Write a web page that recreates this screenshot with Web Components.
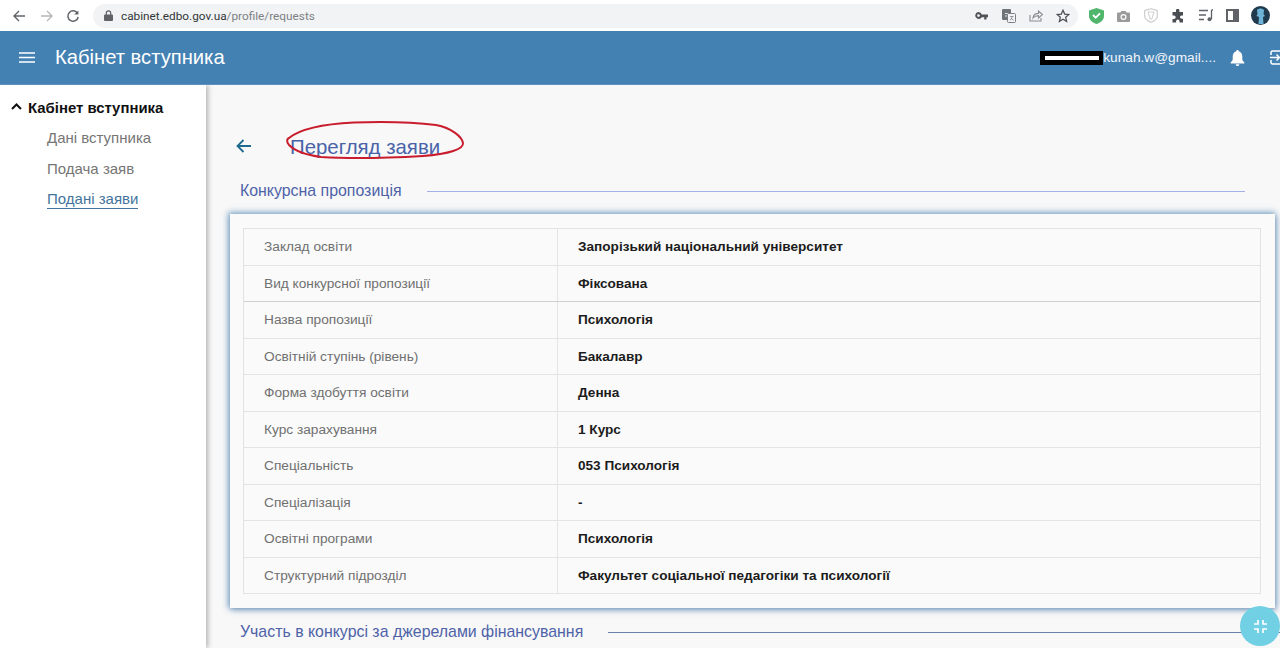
<!DOCTYPE html>
<html lang="uk">
<head>
<meta charset="utf-8">
<title>Перегляд заяви</title>
<style>
  html, body { margin: 0; height: 648px; overflow: hidden; background: #f8f8f8; font-family: "Liberation Sans", Arial, sans-serif; }
  body { display: flex; flex-direction: column; }
</style>
</head>
<body>
<browser-bar url-host="cabinet.edbo.gov.ua" url-path="/profile/requests"></browser-bar>
<app-header title="Кабінет вступника" user="kunah.w@gmail...."></app-header>
<div style="display:flex;flex:1;min-height:0">
  <side-nav>
    <nav-item>Дані вступника</nav-item>
    <nav-item>Подача заяв</nav-item>
    <nav-item active>Подані заяви</nav-item>
  </side-nav>
  <main-view>
    <page-title>Перегляд заяви</page-title>
    <section-title>Конкурсна пропозиція</section-title>
    <info-card>
      <info-row label="Заклад освіти">Запорізький національний університет</info-row>
      <info-row label="Вид конкурсної пропозиції" strong>Фіксована</info-row>
      <info-row label="Назва пропозиції">Психологія</info-row>
      <info-row label="Освітній ступінь (рівень)">Бакалавр</info-row>
      <info-row label="Форма здобуття освіти">Денна</info-row>
      <info-row label="Курс зарахування">1 Курс</info-row>
      <info-row label="Спеціальність">053 Психологія</info-row>
      <info-row label="Спеціалізація">-</info-row>
      <info-row label="Освітні програми">Психологія</info-row>
      <info-row label="Структурний підрозділ">Факультет соціальної педагогіки та психології</info-row>
    </info-card>
    <section-title dark>Участь в конкурсі за джерелами фінансування</section-title>
    <next-card></next-card>
  </main-view>
</div>
<fab-button></fab-button>

<script>
const define = (name, html, init) => {
    customElements.define(name, class extends HTMLElement {
        constructor() {
            super();
            this.attachShadow({ mode: 'open' }).innerHTML = html;
        }
        connectedCallback() {
            if (init) init(this, this.shadowRoot);
        }
    });
};

define('browser-bar', `
<style>
  :host { display: flex; align-items: center; height: 31px; flex: none; background: #fff; box-sizing: border-box; padding: 0 0 0 12px; color: #5f6368; }
  svg { display: block; flex: none; }
  .nav { display: flex; gap: 14px; align-items: center; width: 81px; flex: none; }
  .nav svg:last-child { margin-left: -2px; }
  .pill { width: 985px; height: 24px; border-radius: 12px; background: #f1f3f4; display: flex; align-items: center; box-sizing: border-box; padding: 0 1px 0 11px; flex: none; }
  .url { font: 11.8px "Roboto", "Liberation Sans", sans-serif; color: #33373a; margin-left: 8px; flex: 1; }
  .url span { color: #7d8185; }
  .icons { display: grid; grid-auto-flow: column; grid-auto-columns: 27.25px; justify-items: center; align-items: center; }
  .ext { margin-left: 5px; }
</style>
<div class="nav">
  <svg width="14" height="14" viewBox="0 0 14 14" fill="none" stroke="#5f6368" stroke-width="1.4"><path d="M13 7H2M7 2 2 7l5 5"/></svg>
  <svg width="14" height="14" viewBox="0 0 14 14" fill="none" stroke="#b4b7ba" stroke-width="1.4"><path d="M1 7h11M7 2l5 5-5 5"/></svg>
  <svg width="14" height="14" viewBox="0 0 14 14" fill="none" stroke="#5f6368" stroke-width="1.5"><path d="M11.6 4.4A5.2 5.2 0 1 0 12.2 8"/><path d="M12.4 1.4v4.200H8.200z" fill="#5f6368" stroke="none"/></svg>
</div>
<div class="pill">
  <svg width="9" height="11" viewBox="0 0 9 11" fill="#5f6368"><path d="M1 4.500h7a1 1 0 0 1 1 1V10a1 1 0 0 1-1 1H1a1 1 0 0 1-1-1V5.500a1 1 0 0 1 1-1z"/><path d="M2.300 5V3a2.200 2.200 0 0 1 4.400 0v2" fill="none" stroke="#5f6368" stroke-width="1.200"/></svg>
  <div class="url"><b style="font-weight:400" id="h"></b><span id="p"></span></div>
  <div class="icons">
    <svg width="13" height="8" viewBox="0 0 13 8" fill="#4f5357"><path d="M3.500 0a3.500 3.500 0 0 1 3.300 2.500H13v2.800h-1.500V7.500H9.200V5.300H6.800A3.500 3.500 0 1 1 3.500 0zm0 2.200a1.300 1.300 0 1 0 0 2.800 1.300 1.300 0 0 0 0-2.800z"/></svg>
    <svg width="14" height="14" viewBox="0 0 14 14"><rect x="0" y="0" width="9" height="11" rx="1" fill="#6f7478"/><path d="M3 4.500h3.500M3 7h3" stroke="#e4e6e8"/><rect x="5.500" y="4.500" width="8" height="9" rx="1" fill="#f1f3f4" stroke="#7b8084"/><path d="M8 7.500h3.500M10 7.500c0 2-1 3-2.200 3.600M9 9c.5 1 1.500 1.800 2.500 2.100" stroke="#7b8084" fill="none" stroke-width=".8"/></svg>
    <svg width="14" height="13" viewBox="0 0 14 13" fill="none" stroke="#8a8e92" stroke-width="1.100"><path d="M1 6v6h11V9"/><path d="M4 9c.4-3 2.500-4.600 5.500-4.600V2L13.500 5.500 9.500 9V6.600C7 6.600 5.200 7.500 4 9z"/></svg>
    <svg width="14" height="14" viewBox="0 0 14 14" fill="none" stroke="#4f5357" stroke-width="1.300"><path d="M7 1.300 8.700 5.100l4.100.4-3.100 2.800.9 4.100L7 10.300l-3.600 2.100.9-4.100L1.200 5.500l4.100-.4z"/></svg>
  </div>
</div>
<div class="icons ext">
  <svg width="15" height="16" viewBox="0 0 15 16"><path d="M7.500 0 15 2.500V8c0 4-3.500 6.800-7.500 8C3.500 14.800 0 12 0 8V2.500z" fill="#4fb66b"/><path d="M4 7l2.700 2.700L11 5.300" fill="none" stroke="#fff" stroke-width="1.800"/></svg>
  <svg width="13" height="12" viewBox="0 0 13 12"><path d="M1 2.500h2.500L4.500 1h4l1 1.500H12a1 1 0 0 1 1 1V11a1 1 0 0 1-1 1H1a1 1 0 0 1-1-1V3.500a1 1 0 0 1 1-1z" fill="#9a9a9a"/><circle cx="6.500" cy="7" r="3" fill="#fff"/><circle cx="6.500" cy="7" r="1.800" fill="#9a9a9a"/></svg>
  <svg width="14" height="15" viewBox="0 0 14 15" fill="none" stroke="#c9c9c9" stroke-width="1.100"><path d="M7 .7 13.300 2.500V8c0 3-2.800 5-6.300 6.300C3.500 13 .7 11 .7 8V2.500z"/><path d="M4 4h6L7.800 11H6.200z" stroke="#d4d4d4"/></svg>
  <svg width="14" height="14" viewBox="0 0 14 14" fill="#4a4e52"><path d="M5 1.500a1.700 1.700 0 0 1 3.400 0V3H12v3.400h-1.300a1.700 1.700 0 0 0 0 3.400H12V13.500H8.500v-1.300a1.700 1.700 0 0 0-3.400 0v1.300H1.500V10H3a1.700 1.700 0 0 0 0-3.400H1.500V3H5z"/></svg>
  <svg width="14" height="13" viewBox="0 0 14 13" fill="none" stroke="#5f6368" stroke-width="1.300"><path d="M0 1.500h9M0 6h7M0 10.500h5"/><path d="M12.500 1v9M12.500 1H14"/><circle cx="10.500" cy="10.300" r="2" fill="#5f6368" stroke="none"/></svg>
  <svg width="13" height="13" viewBox="0 0 13 13"><rect x="1" y="1" width="11" height="11" fill="none" stroke="#5f6368" stroke-width="2"/><rect x="7" y="1" width="5" height="11" fill="#5f6368"/></svg>
  <svg width="19" height="19" viewBox="0 0 19 19"><circle cx="9.500" cy="9.500" r="9.500" fill="#1f3a4d"/><path d="M6 4c2-2 5-2 7 0l-.5 4 1.500 2-2 1 .5 7H7.500l.5-7-2.500-1 1-2z" fill="#6db3d8"/></svg>
</div>`, (el, root) => {
    root.getElementById('h').textContent = el.getAttribute('url-host');
    root.getElementById('p').textContent = el.getAttribute('url-path');
});

define('app-header', `
<style>
  :host { display: flex; align-items: center; height: 54px; flex: none; background: #4481b3; color: #fff; box-sizing: border-box; padding-left: 19px; border-bottom: 1px solid #5c90bd; position: relative; z-index: 2; overflow: hidden; }
  .title { font-size: 20.2px; margin-left: 20px; flex: 1; white-space: nowrap; }
  .black { width: 63px; height: 14px; background: #000; display: flex; align-items: center; justify-content: center; flex: none; }
  .black i { display: block; width: 54px; height: 4px; background: #fff; }
  .user { font-size: 13.7px; display: flex; align-items: center; color: #f2f6fa; flex: none; }
  .user span { white-space: nowrap; }
  .bell { margin-left: 14px; flex: none; display: block; }
  .exit { margin-left: 25px; margin-right: -5px; flex: none; display: block; }
</style>
<svg width="16" height="11" viewBox="0 0 16 11" fill="none" stroke="#fff" stroke-width="1.500" style="flex:none"><path d="M0 1h16M0 5.500h16M0 10h16"/></svg>
<div class="title" id="t"></div>
<div class="user"><div class="black"><i></i></div><span id="u"></span></div>
<svg class="bell" width="15" height="16" viewBox="0 0 15 16" fill="#fff"><path d="M7.500 0a1.200 1.200 0 0 1 1.200 1.300C11 2 12.300 4 12.300 6.500V10l2 2.500V13.500H.7v-1L2.700 10V6.500C2.700 4 4 2 6.300 1.300A1.200 1.200 0 0 1 7.500 0z"/><path d="M5.700 14.300h3.600a1.800 1.800 0 0 1-3.600 0z"/></svg>
<svg class="exit" width="15" height="15" viewBox="0 0 15 15" fill="none" stroke="#fff" stroke-width="1.500"><path d="M1 5V2.500A1.500 1.500 0 0 1 2.500 1h10A1.500 1.500 0 0 1 14 2.500v10a1.500 1.500 0 0 1-1.500 1.500h-10A1.500 1.500 0 0 1 1 12.500V10"/><path d="M0 7.500h9M6.500 4.500l3 3-3 3"/></svg>`, (el, root) => {
    root.getElementById('t').textContent = el.getAttribute('title');
    root.getElementById('u').textContent = el.getAttribute('user');
});

define('side-nav', `
<style>
  :host { display: block; width: 206px; flex: none; background: #fff; box-sizing: border-box; padding: 13px 0 0 11px; box-shadow: 2px 0 5px rgba(0,0,0,.28); position: relative; z-index: 1; }
  .head { display: flex; align-items: center; font-size: 14.9px; font-weight: 700; color: #111; height: 20px; gap: 6px; margin-bottom: 5.4px; }
  .head svg { margin-top: -3px; }
  .list { display: flex; flex-direction: column; padding-left: 36px; }
</style>
<div class="head"><svg width="11" height="7" viewBox="0 0 11 7" fill="none" stroke="#111" stroke-width="2"><path d="M1 6l4.500-4.500L10 6"/></svg>Кабінет вступника</div>
<div class="list"><slot></slot></div>`);

define('nav-item', `
<style>
  :host { display: block; font-size: 15px; line-height: 30.3px; color: #757575; }
  :host([active]) { color: #44749c; }
  :host([active]) span { border-bottom: 1px solid #44749c; padding-bottom: 1px; }
</style>
<span><slot></slot></span>`);

define('main-view', `
<style>
  :host { display: block; flex: 1; min-width: 0; background: #f8f8f8; box-sizing: border-box; padding: 41px 5px 0 24px; overflow: hidden; position: relative; }
</style>
<slot></slot>`);

define('page-title', `
<style>
  :host { display: flex; align-items: center; height: 40px; position: relative; font-size: 20.4px; color: #4a63a8; }
  svg.arrow { margin: 0 39px 0 6px; flex: none; display: block; }
  svg.ring { position: absolute; left: 56px; top: -5px; overflow: visible; }
  span { margin-top: 2px; }
</style>
<svg class="arrow" width="15" height="14" viewBox="0 0 15 14" fill="none" stroke="#1f6a8f" stroke-width="1.800"><path d="M15 7H2M7.500 1 1.500 7l6 6"/></svg>
<span><slot></slot></span>
<svg class="ring" width="178" height="40" viewBox="0 0 178 40" fill="none" stroke="#c91c2c" stroke-width="2"><path d="M3 17C14 8 38 3 68 1.500c30-1 62 0 82 2.500 16 3 26 12 27 18 1 6-14 11-40 13-34 2-72 3-102 1C20 34 9 30 3 24 0 20 1 18 3 17z"/></svg>`);

define('section-title', `
<style>
  :host { display: flex; align-items: center; font-size: 15.9px; color: #4e62a8; height: 22px; margin: 14px 30px 0 10px; gap: 25px; white-space: nowrap; }
  i { display: block; flex: 1; height: 1px; background: #a3b0e6; }
  :host([dark]) { margin: 13px -30px 0 10px; }
  :host([dark]) i { background: #6c7fa8; }
</style>
<slot></slot><i></i>`);

define('info-card', `
<style>
  :host { display: block; background: #fafafa; margin: 12px 0 0 0; padding: 14px 14px 14px 13px; box-shadow: -1px -1px 6px 1px rgba(68,129,179,.6), 1px 2px 6px rgba(68,110,160,.55); }
  .tbl { border: 1px solid #e3e3e3; border-bottom: none; }
</style>
<div class="tbl"><slot></slot></div>`);

define('info-row', `
<style>
  :host { display: grid; grid-template-columns: 314px 1fr; height: 36.5px; box-sizing: border-box; border-bottom: 1px solid #e4e4e4; align-items: center; }
  :host([strong]) { border-bottom-color: #cfcfcf; }
  .l { color: #707070; font-size: 13.7px; padding-left: 20px; height: 100%; display: flex; align-items: center; border-right: 1px solid #e4e4e4; }
  .v { color: #1c1c1c; font-size: 13.6px; font-weight: 700; padding-left: 20px; }
</style>
<div class="l" id="l"></div><div class="v"><slot></slot></div>`, (el, root) => {
    root.getElementById('l').textContent = el.getAttribute('label');
});

define('next-card', `
<style>
  :host { display: block; height: 30px; margin-top: 13px; background: #fafafa; box-shadow: 0 0 5px rgba(68,129,179,.35); }
</style>`);

define('fab-button', `
<style>
  :host { position: fixed; left: 1240px; top: 606px; width: 40px; height: 40px; border-radius: 50%; background: #72d0e4; display: flex; align-items: center; justify-content: center; z-index: 3; }
</style>
<svg width="13" height="13" viewBox="0 0 13 13" fill="none" stroke="#fff" stroke-width="1.700"><path d="M0 4h4V0M9 0v4h4M0 9h4v4M9 13V9h4"/></svg>`);
</script>
</body>
</html>
